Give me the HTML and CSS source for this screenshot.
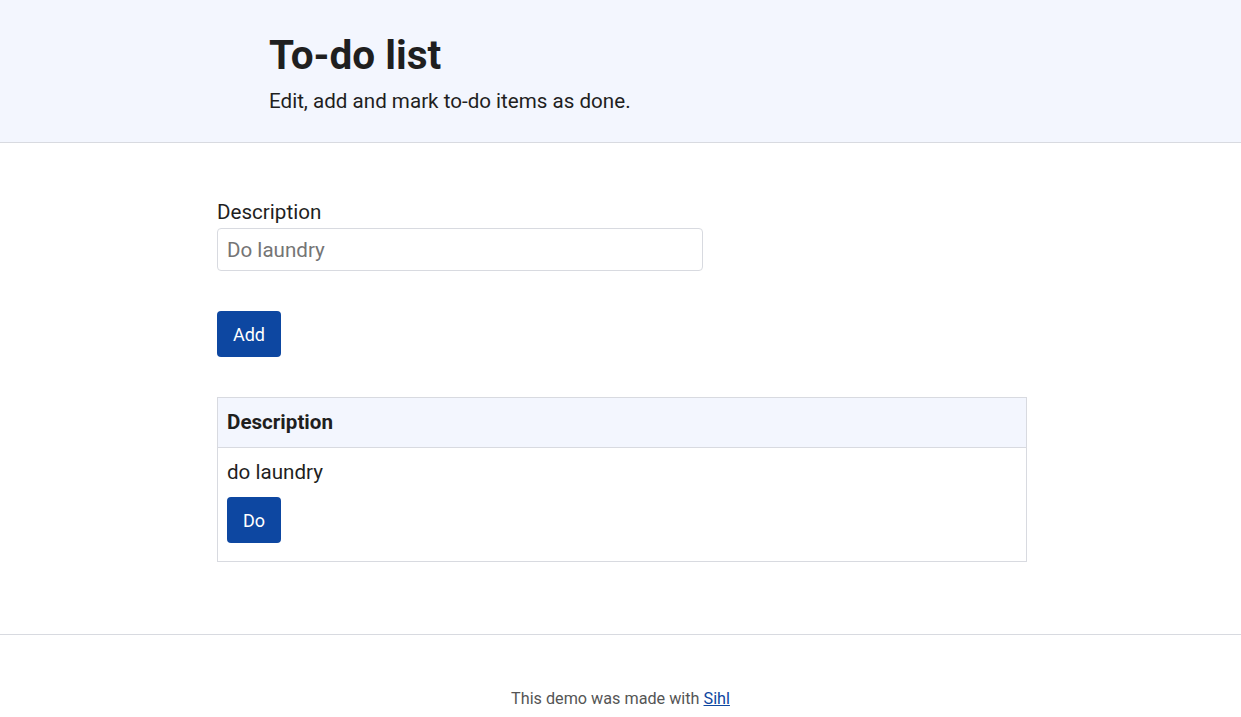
FILE: index.html
```html
<!DOCTYPE html>
<html lang="en">
<head>
<meta charset="utf-8">
<title>To-do list</title>
<link rel="stylesheet" href="styles.css">
</head>
<body>
<header class="hero">
  <div class="hero-inner">
    <h1 class="title">To-do list</h1>
    <p class="subtitle">Edit, add and mark to-do items as done.</p>
  </div>
</header>
<main class="main">
  <form class="form">
    <label class="label" for="desc">Description</label>
    <input class="input" id="desc" type="text" placeholder="Do laundry">
    <button class="btn btn-add" type="button">Add</button>
  </form>
  <table class="table">
    <thead>
      <tr><th class="th">Description</th></tr>
    </thead>
    <tbody>
      <tr>
        <td class="td">
          <div class="item-text">do laundry</div>
          <button class="btn btn-do" type="button">Do</button>
        </td>
      </tr>
    </tbody>
  </table>
</main>
<footer class="footer">
  <p class="footer-text">This demo was made with <a class="footer-link" href="#">Sihl</a></p>
</footer>
</body>
</html>
```

FILE: styles.css
```css
html, body {
  margin: 0;
  padding: 0;
}
body {
  font-family: Roboto, "Liberation Sans", sans-serif;
  color: #1f1f1f;
  background: #ffffff;
}
.hero {
  background: #f3f6fe;
  border-bottom: 1px solid #d8dae0;
  height: 143px;
  box-sizing: border-box;
}
.hero-inner {
  width: 703px;
  margin: 0 auto;
  padding-top: 31px;
}
.title {
  margin: 0;
  font-size: 40.5px;
  font-weight: 700;
  line-height: 48px;
  color: #1f1f1f;
}
.subtitle {
  margin: 8px 0 0;
  font-size: 20.6px;
  line-height: 28px;
}
.main {
  width: 810px;
  margin-left: calc(50% - 403.5px);
  padding-top: 57px;
  padding-bottom: 72px;
}
.form {
  display: flex;
  flex-direction: column;
  align-items: flex-start;
}
.label {
  font-size: 20.6px;
  line-height: 24px;
  margin-bottom: 4px;
}
.input {
  width: 486px;
  height: 43px;
  box-sizing: border-box;
  border: 1px solid #d8dae0;
  border-radius: 4px;
  padding: 0 9px;
  font-family: Roboto, "Liberation Sans", sans-serif;
  font-size: 20.6px;
  color: #1f1f1f;
  outline: none;
}
.input::placeholder {
  color: #757575;
}
.btn {
  background: #0d47a1;
  color: #ffffff;
  border: none;
  border-radius: 4px;
  font-family: Roboto, "Liberation Sans", sans-serif;
  cursor: pointer;
  padding: 0;
}
.btn-add {
  margin-top: 40px;
  width: 64px;
  height: 46px;
  font-size: 18px;
}
.btn-do {
  width: 54px;
  height: 46px;
  font-size: 18px;
  margin-top: 12px;
}
.table {
  margin-top: 40px;
  width: 810px;
  border-collapse: collapse;
  border: 1px solid #d8dae0;
}
.th {
  text-align: left;
  background: #f3f6fe;
  font-size: 20.6px;
  font-weight: 700;
  height: 50px;
  box-sizing: border-box;
  padding: 0 9px 1px;
  border-bottom: 1px solid #d8dae0;
}
.td {
  padding: 11px 9px 18px;
  font-size: 20.6px;
}
.item-text {
  line-height: 26px;
}
.footer {
  border-top: 1px solid #d8dae0;
  text-align: center;
  padding-top: 52px;
}
.footer-text {
  margin: 0;
  font-size: 16.2px;
  line-height: 24px;
  color: #555555;
}
.footer-link {
  color: #0d47a1;
}
```
